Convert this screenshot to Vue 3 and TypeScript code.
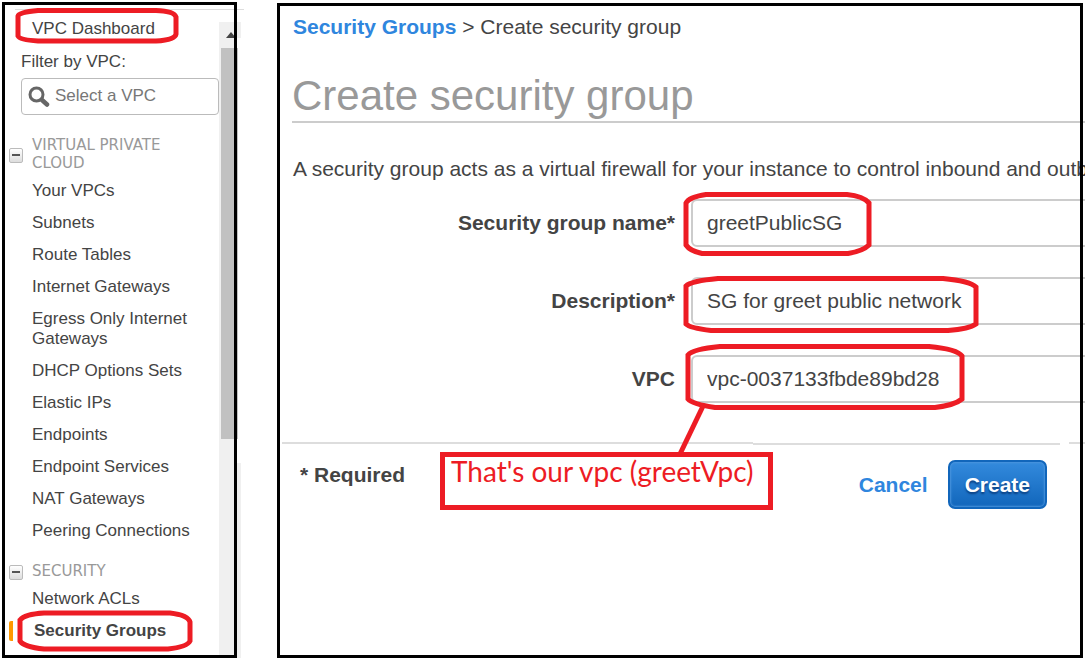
<script setup lang="ts">
import { ref } from 'vue'

interface NavItem {
  label: string
  active?: boolean
}
interface NavGroup {
  title: string
  items: NavItem[]
}

const groups: NavGroup[] = [
  {
    title: 'VIRTUAL PRIVATE CLOUD',
    items: [
      { label: 'Your VPCs' },
      { label: 'Subnets' },
      { label: 'Route Tables' },
      { label: 'Internet Gateways' },
      { label: 'Egress Only Internet Gateways' },
      { label: 'DHCP Options Sets' },
      { label: 'Elastic IPs' },
      { label: 'Endpoints' },
      { label: 'Endpoint Services' },
      { label: 'NAT Gateways' },
      { label: 'Peering Connections' },
    ],
  },
  {
    title: 'SECURITY',
    items: [{ label: 'Network ACLs' }, { label: 'Security Groups', active: true }],
  },
]

const filter = ref('')
const groupName = ref('greetPublicSG')
const description = ref('SG for greet public network')
const vpc = ref('vpc-0037133fbde89bd28')
</script>

<template>
  <div class="page">
    <aside class="sidebar">
      <nav class="nav">
        <a href="#" class="item dashboard">VPC Dashboard</a>
        <label class="filter-label" for="vpc-filter">Filter by VPC:</label>
        <div class="filter">
          <svg class="search" width="22" height="22" viewBox="0 0 22 22" aria-hidden="true">
            <circle cx="8.500" cy="8.500" r="6.500" fill="none" stroke="#666" stroke-width="3" />
            <path d="M14 14L19 18.500" stroke="#666" stroke-width="4.500" stroke-linecap="round" />
          </svg>
          <input id="vpc-filter" v-model="filter" type="text" placeholder="Select a VPC" />
        </div>
        <section v-for="group in groups" :key="group.title" class="group">
          <div class="group-head">
            <button type="button" class="toggle" :aria-label="'Collapse ' + group.title"></button>
            <h2>{{ group.title }}</h2>
          </div>
          <a
            v-for="item in group.items"
            :key="item.label"
            href="#"
            class="item"
            :class="{ active: item.active }"
          >{{ item.label }}</a>
        </section>
      </nav>
      <div class="scrollbar" aria-hidden="true">
        <div class="scroll-up"></div>
        <div class="scroll-track"><div class="scroll-thumb"></div></div>
        <div class="scroll-rest"></div>
      </div>
      <div class="frame frame-left"></div>
    </aside>

    <main class="main">
      <div class="crumbs"><a href="#">Security Groups</a> &gt; Create security group</div>
      <h1>Create security group</h1>
      <p class="intro">A security group acts as a virtual firewall for your instance to control inbound and outb</p>
      <form @submit.prevent>
        <div class="field">
          <label for="sg-name">Security group name*</label>
          <input id="sg-name" v-model="groupName" type="text" />
        </div>
        <div class="field">
          <label for="sg-desc">Description*</label>
          <input id="sg-desc" v-model="description" type="text" />
        </div>
        <div class="field">
          <label for="sg-vpc">VPC</label>
          <input id="sg-vpc" v-model="vpc" type="text" />
        </div>
        <div class="divider"><i class="seg-a"></i><i class="seg-b"></i><i class="seg-c"></i></div>
        <div class="footer">
          <strong class="required">* Required</strong>
          <a href="#" class="cancel">Cancel</a>
          <button type="submit" class="create">Create</button>
        </div>
      </form>
      <div class="frame frame-right"></div>
    </main>

    <svg class="marks" aria-hidden="true">
      <path d="M18 16Q19 12 38 10.500H156Q174 11 176 17V34Q175 40 156 41H38Q20 40 18 36Z" />
      <path d="M20 620Q25 614 44 613H170Q188 615 190 622V641Q187 647 168 649H44Q24 647 20 641Z" />
      <path d="M686 203Q689 197 706 194.500H847Q863 196 869 203V245Q863 251 848 253.500H702Q690 251 686 245Z" />
      <path d="M686 286Q691 281 718 278.500H943Q970 281 976 287V324Q969 329 948 330.500H711Q690 328 686 324Z" />
      <path d="M688 355Q693 349 720 346.500H929Q957 349 962 356V399Q955 405 935 407.500H715Q692 404 688 399Z" />
      <path d="M704 404L680 454" />
    </svg>
    <div class="callout">That's our vpc (greetVpc)</div>
  </div>
</template>

<style>
body {
  margin: 0;
  background: #fff;
}
</style>

<style scoped>
.page {
  position: relative;
  display: flex;
  min-height: 100vh;
  overflow: hidden;
  color: #444;
  font-family: "Liberation Sans", Arial, sans-serif;
}
.page * {
  box-sizing: border-box;
}
a {
  color: inherit;
  text-decoration: none;
}
.sidebar {
  position: relative;
  display: flex;
  flex: none;
  width: 244px;
  font-size: 17px;
  line-height: 20px;
}
.nav {
  width: 219px;
  padding-top: 12px;
}
.nav::before {
  content: "";
  position: absolute;
  top: 9px;
  left: 15px;
  right: 0;
  height: 1px;
  background: #ddd;
}
.item {
  display: block;
  padding: 7px 24px 5px 32px;
}
.filter-label {
  display: block;
  margin-top: 8px;
  padding-left: 21px;
}
.filter {
  display: flex;
  align-items: center;
  height: 37px;
  margin: 6px 0 21px 21px;
  padding-left: 6px;
  border: 1px solid #bbb;
  border-radius: 4px;
}
.search {
  flex: none;
}
.filter input {
  flex: 1;
  min-width: 0;
  padding: 0 0 2px 5px;
  border: 0;
  outline: 0;
  background: none;
  color: #444;
  font: inherit;
}
.filter input::placeholder {
  color: #777;
  opacity: 1;
}
.group {
  margin-bottom: 16px;
}
.group:last-child {
  margin-bottom: 0;
}
.group-head {
  display: flex;
  align-items: center;
  gap: 9px;
  padding: 0 24px 2px 9px;
}
.group-head h2 {
  flex: 1;
  margin: 0;
  color: #999;
  font: 15px/18px "DejaVu Sans", Verdana, sans-serif;
}
.toggle {
  display: grid;
  place-items: center;
  width: 14px;
  height: 15px;
  margin-top: 2px;
  padding: 0;
  border: 1px solid #bbb;
  border-radius: 2px;
  background: linear-gradient(#fff, #ddd);
}
.toggle::before {
  content: "";
  width: 8px;
  height: 2px;
  background: #555;
}
.active {
  position: relative;
  padding-left: 34px;
  font-weight: bold;
}
.active::before {
  content: "";
  position: absolute;
  top: 7px;
  left: 9px;
  width: 4px;
  height: 20px;
  border-radius: 2px 0 0 2px;
  background: #f90;
}
.scrollbar {
  display: flex;
  flex-direction: column;
  width: 22px;
  padding-top: 22px;
}
.scroll-up {
  height: 16px;
  background: #f0f0f0;
}
.scroll-up::before {
  content: "";
  display: block;
  width: 0;
  margin-left: 7px;
  padding-top: 10px;
  border: 5px solid transparent;
  border-top: 0;
  border-bottom: 6px solid #444;
}
.scroll-track {
  width: 19px;
  height: 425px;
  padding: 10px 0 0 2px;
  background: linear-gradient(90deg, #f0f0f0 16px, #fff 16px);
}
.scroll-thumb {
  height: 391px;
  background: #c1c1c1;
}
.scroll-rest {
  flex: 1;
  background: #f0f0f0;
}
.frame {
  position: absolute;
  border: 3px solid #000;
  pointer-events: none;
}
.frame-left {
  inset: 2px 7px 0 2px;
}
.frame-right {
  inset: 3px 2px 0 33px;
}
.main {
  position: relative;
  flex: 1;
  min-width: 0;
  padding: 15px 0 0 48px;
  overflow: hidden;
  font-size: 21px;
  line-height: 24px;
  white-space: nowrap;
}
.crumbs,
.intro {
  padding-left: 1px;
}
.crumbs a,
.cancel {
  color: #2f86de;
  font-weight: bold;
}
h1 {
  margin: 33px 0 0;
  padding-bottom: 1px;
  border-bottom: 2px solid #ccc;
  color: #999;
  font-size: 42px;
  font-weight: normal;
  line-height: 48px;
}
.intro {
  margin: 34px 0 18px;
}
.field {
  display: flex;
  align-items: center;
  gap: 16px;
  margin-bottom: 30px;
}
.field label {
  width: 383px;
  font-weight: bold;
  text-align: right;
}
.field input {
  flex: 1;
  min-width: 0;
  height: 48px;
  margin-right: -10px;
  padding: 0 14px;
  border: 2px solid #ccc;
  border-radius: 6px;
  outline: 0;
  background: #fff;
  color: #444;
  font: inherit;
}
.divider {
  display: flex;
  margin: 39px 0 0 -10px;
}
.divider i {
  height: 2px;
  background: #ddd;
}
.seg-a {
  width: 471px;
}
.seg-b {
  flex: 1;
  margin: 1px 9px 0 0;
}
.seg-c {
  width: 16px;
}
.footer {
  display: flex;
  align-items: center;
  padding: 15px 38px 0 8px;
}
.required {
  flex: 1;
  padding-bottom: 20px;
}
.create {
  height: 49px;
  margin-left: 20px;
  padding: 0 15px;
  border: 2px solid #1166bb;
  border-radius: 7px;
  background: linear-gradient(#338add, #1166bb);
  box-shadow: inset 0 0 2px 1px #4a94dd;
  color: #fff;
  font: inherit;
  font-weight: bold;
  text-shadow: 0 2px 2px #0a3f80;
}
.marks {
  position: absolute;
  top: 0;
  left: 0;
  width: 100%;
  height: 100%;
  fill: none;
  stroke: #ed1c24;
  stroke-width: 5;
  pointer-events: none;
}
.callout {
  position: absolute;
  top: 452px;
  left: 440px;
  width: 333px;
  height: 58px;
  padding: 0 6px;
  border: 5px solid #ed1c24;
  background: #fff;
  color: #ed1c24;
  font: 28px/28px Lato, "Open Sans", sans-serif;
  white-space: nowrap;
}
</style>
